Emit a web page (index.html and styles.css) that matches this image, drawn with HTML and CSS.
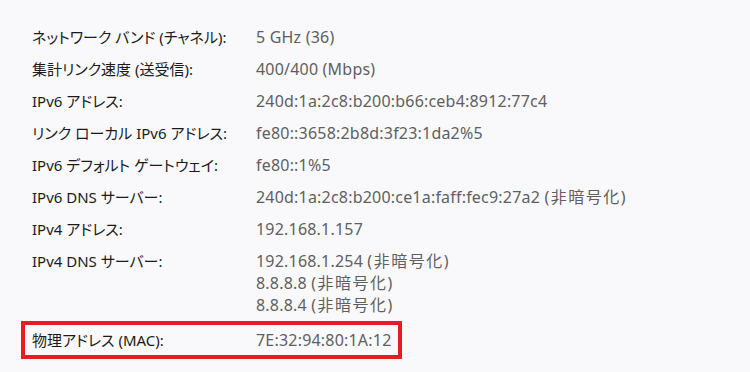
FILE: index.html
```html
<!DOCTYPE html>
<html lang="ja">
<head>
<meta charset="utf-8">
<link rel="stylesheet" href="styles.css">
</head>
<body>
<div class="list">
  <div class="row"><div class="k">ネットワーク バンド (チャネル):</div><div class="v">5 GHz (36)</div></div>
  <div class="row"><div class="k">集計リンク速度 (送受信):</div><div class="v">400/400 (Mbps)</div></div>
  <div class="row"><div class="k">IPv6 アドレス:</div><div class="v">240d:1a:2c8:b200:b66:ceb4:8912:77c4</div></div>
  <div class="row"><div class="k">リンク ローカル IPv6 アドレス:</div><div class="v">fe80::3658:2b8d:3f23:1da2%5</div></div>
  <div class="row"><div class="k">IPv6 デフォルト ゲートウェイ:</div><div class="v">fe80::1%5</div></div>
  <div class="row"><div class="k">IPv6 DNS サーバー:</div><div class="v">240d:1a:2c8:b200:ce1a:faff:fec9:27a2 <span class="cjk">(非暗号化)</span></div></div>
  <div class="row"><div class="k">IPv4 アドレス:</div><div class="v">192.168.1.157</div></div>
  <div class="row"><div class="k">IPv4 DNS サーバー:</div><div class="v">192.168.1.254 <span class="cjk">(非暗号化)</span><br>8.8.8.8 <span class="cjk">(非暗号化)</span><br>8.8.8.4 <span class="cjk">(非暗号化)</span></div></div>
  <div class="row hl"><div class="k">物理アドレス (MAC):</div><div class="v">7E:32:94:80:1A:12</div></div>
</div>
</body>
</html>
```

FILE: styles.css
```css
html, body {
  margin: 0;
  background: #f9f9fb;
}
body {
  font-family: "Noto Sans", "Noto Sans CJK JP", sans-serif;
  line-height: 22px;
}
.list {
  padding: 21px 0 0 32px;
  display: flex;
  flex-direction: column;
  align-items: flex-start;
}
.row {
  display: grid;
  grid-template-columns: 224px auto;
  padding: 5px 0;
  white-space: nowrap;
}
.k {
  color: #1b1b1b;
  font-size: 15px;
  font-feature-settings: "palt";
}
.v {
  color: #5f5f5f;
  font-size: 16px;
  letter-spacing: 0.2px;
}
.cjk {
  letter-spacing: 1.5px;
}
.row.hl {
  margin-left: -11px;
  padding: 4px 0 4px 7px;
  width: 366px;
  border: 4px solid #e81c24;
  box-sizing: content-box;
}
```
